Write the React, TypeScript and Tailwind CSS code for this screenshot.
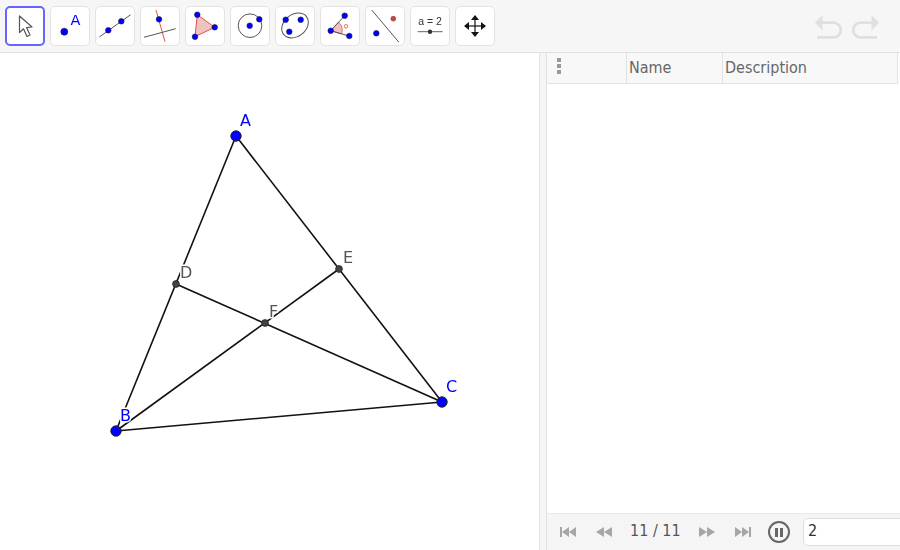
const blue = '#0000ff'
const red = '#e2504a'

function Dot({ x, y, r = 2.8, fill = blue, stroke = '#1a1a4a' }: { x: number; y: number; r?: number; fill?: string; stroke?: string }) {
  return <circle cx={x} cy={y} r={r} fill={fill} stroke={stroke} strokeWidth={0.6} />
}

// toolbar icons, all drawn on the 40x40 button box
const toolIcons = [
  <path key="move" d="M14.5 10 L14.5 26.5 L18.5 22.8 L22 30.5 L25 29 L21.6 21.6 L27 21 Z" fill="#fff" stroke="#555" strokeWidth={1.2} strokeLinejoin="round" />,
  <g key="point">
    <Dot x={14.3} y={25.7} r={3.5} />
    <text x={20.5} y={19} fill={blue} fontSize={14.5} fontFamily="'DejaVu Sans', sans-serif">A</text>
  </g>,
  <g key="line">
    <line x1={4.3} y1={31} x2={35.7} y2={8.7} stroke="#555" strokeWidth={1} />
    <Dot x={13.3} y={24.3} />
    <Dot x={26.3} y={15.3} />
  </g>,
  <g key="perp">
    <line x1={16} y1={4} x2={25} y2={35.7} stroke={red} strokeWidth={1} />
    <line x1={4} y1={31.3} x2={35.7} y2={22.7} stroke="#555" strokeWidth={1} />
    <Dot x={19} y={13.3} />
  </g>,
  <g key="polygon">
    <polygon points="12.3,8.7 29.7,21.3 10,30.7" fill="#efc4c0" stroke={red} strokeWidth={1} />
    <Dot x={12.3} y={8.7} />
    <Dot x={29.7} y={21.3} />
    <Dot x={10} y={30.7} />
  </g>,
  <g key="circle">
    <circle cx={20} cy={19.7} r={11.8} fill="none" stroke="#555" strokeWidth={1} />
    <Dot x={19.7} y={19.7} />
    <Dot x={29.3} y={13.3} />
  </g>,
  <g key="conic">
    <ellipse cx={20} cy={19.5} rx={14.5} ry={11} transform="rotate(-38 20 19.5)" fill="none" stroke="#555" strokeWidth={1} />
    <Dot x={10.7} y={13.7} />
    <Dot x={25.7} y={13.7} />
    <Dot x={14.3} y={25.7} />
  </g>,
  <g key="angle">
    <path d="M10.7 24.7 L18.5 16 A11.5 11.5 0 0 1 21.5 28 Z" fill="#efc4c0" stroke={red} strokeWidth={0.8} />
    <line x1={10.7} y1={24.7} x2={24.7} y2={9.7} stroke="#555" strokeWidth={1} />
    <line x1={10.7} y1={24.7} x2={29.3} y2={30} stroke="#555" strokeWidth={1} />
    <circle cx={26} cy={20.3} r={1.8} fill="none" stroke={red} strokeWidth={0.8} />
    <Dot x={10.7} y={24.7} />
    <Dot x={24.7} y={9.7} />
    <Dot x={29.3} y={30} />
  </g>,
  <g key="reflect">
    <line x1={6.7} y1={4} x2={33.7} y2={36} stroke="#555" strokeWidth={1} />
    <Dot x={11.3} y={27.3} />
    <Dot x={28.3} y={12.7} r={2.4} fill="#d9403a" stroke="#7a2a2a" />
  </g>,
  <g key="slider">
    <text x={20} y={19.3} textAnchor="middle" fill="#333" fontSize={10.5} fontFamily="'Liberation Sans', sans-serif">a = 2</text>
    <line x1={7.7} y1={25.7} x2={32.7} y2={25.7} stroke="#666" strokeWidth={1} />
    <circle cx={20} cy={25.7} r={2.2} fill="#333" />
  </g>,
  <g key="pan">
    <line x1={11} y1={20} x2={29} y2={20} stroke="#111" strokeWidth={1.2} />
    <line x1={20} y1={11} x2={20} y2={29} stroke="#111" strokeWidth={1.2} />
    <path d="M20 9 L24 14 L16 14 Z M20 31 L24 26 L16 26 Z M9 20 L14 16 L14 24 Z M31 20 L26 16 L26 24 Z" fill="#111" />
  </g>,
]

function ToolButton({ selected, children }: { selected?: boolean; children: React.ReactNode }) {
  return (
    <div
      className={`w-10 h-10 shrink-0 rounded-[5px] bg-white ${
        selected ? 'border-2 border-[#6666ff]' : 'border border-[#e3e3e3]'
      }`}
    >
      <svg width={40} height={40} viewBox="0 0 40 40" className={`[will-change:opacity] ${selected ? '-m-[2px]' : '-m-px'}`}>
        {children}
      </svg>
    </div>
  )
}

function UndoRedo() {
  return (
    <div className="ml-auto flex items-start gap-[10px] pt-[9px] pr-[21px]">
      <svg width={27} height={24} viewBox="0 0 27 24">
        <path d="M0 7.7 L7.5 0 L7.5 15.4 Z" fill="#e0e0e0" />
        <path d="M6 7.7 H18.5 A7 7 0 0 1 18.5 22.3 H2" fill="none" stroke="#e0e0e0" strokeWidth={2.8} />
      </svg>
      <svg width={27} height={24} viewBox="0 0 27 24">
        <path d="M27 7.7 L19.5 0 L19.5 15.4 Z" fill="#e0e0e0" />
        <path d="M21 7.7 H8.5 A7 7 0 0 0 8.5 22.3 H25" fill="none" stroke="#e0e0e0" strokeWidth={2.8} />
      </svg>
    </div>
  )
}

const segments = [
  [236, 136, 116, 431],
  [236, 136, 442, 402],
  [116, 431, 442, 402],
  [176, 284, 442, 402],
  [339, 269, 116, 431],
]

const bigPoints = [
  [236, 136],
  [116, 431],
  [442, 402],
]
const smallPoints = [
  [176, 284],
  [339, 269],
  [265, 323],
]

const labels = [
  { text: 'A', x: 240, y: 126, fill: blue },
  { text: 'B', x: 120, y: 421, fill: blue },
  { text: 'C', x: 446, y: 392, fill: blue },
  { text: 'D', x: 180, y: 278, fill: '#555555' },
  { text: 'E', x: 343, y: 263, fill: '#555555' },
  { text: 'F', x: 269, y: 317, fill: '#555555' },
]

function GraphView() {
  return (
    <div className="w-[539px] h-full shrink-0 bg-white">
      {/* shifted up by the toolbar height so the numbers are page coords */}
      <svg width={539} height={497} viewBox="0 53 539 497" className="[will-change:opacity]">
        {segments.map(([x1, y1, x2, y2], i) => (
          <line key={i} x1={x1} y1={y1} x2={x2} y2={y2} stroke="#111" strokeWidth={1.6} />
        ))}
        {labels.map((l) => (
          <text
            key={l.text}
            x={l.x}
            y={l.y}
            fill={l.fill}
            fontSize={16}
            stroke="#fff"
            strokeWidth={3}
            fontFamily="'DejaVu Sans', sans-serif"
            className="[paint-order:stroke]"
          >
            {l.text}
          </text>
        ))}
        {bigPoints.map(([x, y]) => (
          <circle key={x} cx={x} cy={y} r={5.2} fill={blue} stroke="#222" strokeWidth={1} />
        ))}
        {smallPoints.map(([x, y]) => (
          <circle key={x} cx={x} cy={y} r={3.4} fill="#444" stroke="#222" strokeWidth={0.8} />
        ))}
      </svg>
    </div>
  )
}

function PlayIcon({ d }: { d: string }) {
  return (
    <svg width={16} height={12} viewBox="0 0 16 12" className="shrink-0">
      <path d={d} fill="#a6a6a6" />
    </svg>
  )
}

function AlgebraPanel() {
  return (
    <div className="flex-1 min-w-0 h-full flex flex-col bg-white font-['DejaVu_Sans_Condensed','DejaVu_Sans',sans-serif] [font-stretch:condensed]">
      <div className="h-[31px] shrink-0 flex bg-[#f8f8f8] border-b border-[#e2e2e2] text-[16px] text-[#666666] mr-[2px] border-r">
        <div className="w-[80px] shrink-0 border-r border-[#e2e2e2] pl-[10px] pt-[5px] flex flex-col gap-[2px]">
          <span className="w-1 h-1 bg-[#999999]" />
          <span className="w-1 h-1 bg-[#999999]" />
          <span className="w-1 h-1 bg-[#999999]" />
        </div>
        <div className="w-[96px] shrink-0 border-r border-[#e2e2e2] pl-[2px] leading-[30px]">Name</div>
        <div className="flex-1 pl-[2px] leading-[30px]">Description</div>
      </div>
      <div className="flex-1" />
      <div className="h-[37px] shrink-0 flex items-center bg-[#f5f5f5] border-t border-[#e8e8e8] text-[16px] text-[#555555]">
        <div className="ml-[13px]">
          <PlayIcon d="M0 1 H2 V11 H0 Z M2 6 L9 1 V11 Z M9 6 L16 1 V11 Z" />
        </div>
        <div className="ml-[20px]">
          <PlayIcon d="M0 6 L8 1 V11 Z M8 6 L16 1 V11 Z" />
        </div>
        <span className="ml-[18px] w-[51px] shrink-0 -mt-[2px] whitespace-nowrap">11 / 11</span>
        <div className="ml-[18px]">
          <PlayIcon d="M0 1 L8 6 L0 11 Z M8 1 L16 6 L8 11 Z" />
        </div>
        <div className="ml-[20px]">
          <PlayIcon d="M0 1 L7 6 L0 11 Z M7 1 L14 6 L7 11 Z M14 1 H16 V11 H14 Z" />
        </div>
        <div className="ml-[17px] w-[22px] h-[22px] shrink-0 rounded-full border-2 border-[#666666] flex items-center justify-center gap-[2px]">
          <span className="w-[3px] h-[9px] bg-[#666666]" />
          <span className="w-[3px] h-[9px] bg-[#666666]" />
        </div>
        <div className="ml-[13px] w-[110px] h-[28px] shrink-0 rounded-[5px] border border-[#dddddd] bg-white pl-[4px] text-[16px] leading-[24px] text-[#333333]">
          2
        </div>
      </div>
    </div>
  )
}

export default function App() {
  return (
    <div className="w-[900px] h-[550px] overflow-hidden flex flex-col bg-white font-['DejaVu_Sans',sans-serif]">
      <div className="h-[53px] shrink-0 flex gap-[5px] pl-[5px] pt-[6px] bg-[#f6f6f6] border-b border-[#e2e2e2]">
        {toolIcons.map((icon, i) => (
          <ToolButton key={i} selected={i === 0}>
            {icon}
          </ToolButton>
        ))}
        <UndoRedo />
      </div>
      <div className="flex-1 min-h-0 flex">
        <GraphView />
        <div className="w-2 shrink-0 h-full bg-[#f5f5f5] border-x border-[#e2e2e2]" />
        <AlgebraPanel />
      </div>
    </div>
  )
}
